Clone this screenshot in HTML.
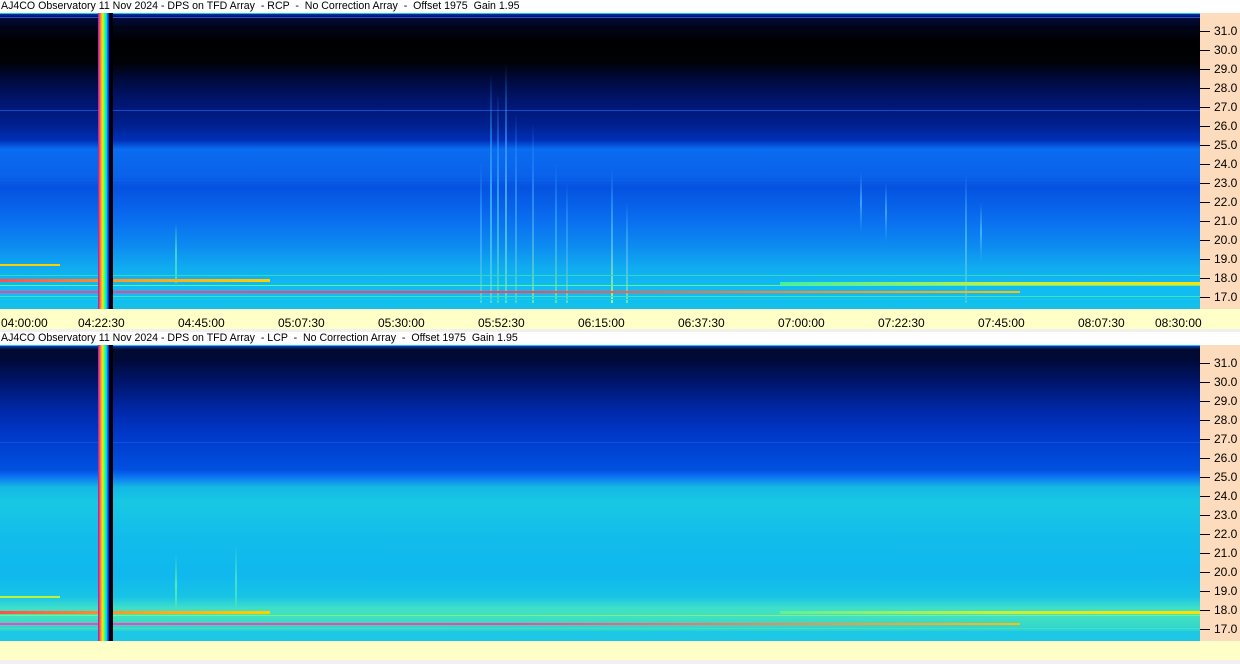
<!DOCTYPE html>
<html><head><meta charset="utf-8"><style>
*{margin:0;padding:0;box-sizing:border-box}
body{width:1240px;height:664px;background:#f0f0f0;position:relative;overflow:hidden;font-family:"Liberation Sans",sans-serif;color:#000}
.title{position:absolute;left:0;height:13px;width:1240px;background:#fff;font-size:10.6px;line-height:13px;white-space:pre;padding-left:1px}
.spec{position:absolute;left:0;width:1200px;overflow:hidden}
.axisr{position:absolute;left:1200px;width:40px;background:#fddcbe}
.taxis{position:absolute;left:0;width:1240px;background:#ffffc8}
.lab{position:absolute;font-size:12px;line-height:12px}
.tick{position:absolute;left:0;width:10px;height:1px;background:#000}
.tl{position:absolute;font-size:12px;line-height:12px;top:8px}
.s{position:absolute;width:2px}
.h{position:absolute;left:0;height:1px}
.rb{position:absolute;left:98px;width:15px;background:linear-gradient(90deg,#2050ff 0,#ff2080 7%,#ff6060 14%,#ff9a20 21%,#ffe000 29%,#b0ff10 36%,#40ff60 43%,#00ffc0 50%,#00c8ff 57%,#0070ff 64%,#2020ff 71%,#000 75%,#000 100%)}
</style></head><body>

<div class="title" style="top:0">AJ4CO Observatory 11 Nov 2024 - DPS on TFD Array  - RCP  -  No Correction Array  -  Offset 1975  Gain 1.95</div>
<div class="spec" style="top:13px;height:296px;background:linear-gradient(180deg,#0a40c0 0,#000a40 1.5%,#000418 5%,#000 10%,#000208 17%,#00093a 22%,#001570 30%,#00208e 38%,#0030b8 43%,#0a6cf0 46%,#0a62ea 55%,#0552e0 59%,#0a6ef0 70%,#0c8cf0 79%,#10acf0 86%,#10bcf0 93%,#12c0f0 100%)">
 <div class="h" style="top:0;width:1200px;background:#20c0ff"></div>
 <div class="h" style="top:4px;width:1200px;background:#2050e0"></div>
 <div class="h" style="top:97px;width:1200px;background:#1848c8"></div>
 <div class="h" style="top:167px;width:1200px;background:#1060f0;opacity:.5"></div>
 <div class="s" style="left:490px;top:60px;height:236px;background:linear-gradient(#2060ff00,#30a0ff,#40e0e0)"></div>
 <div class="s" style="left:497px;top:80px;height:216px;background:linear-gradient(#2060ff00,#30a0ff,#40e0c0)"></div>
 <div class="s" style="left:505px;top:50px;height:246px;background:linear-gradient(#2060ff00,#40a0ff,#50e8c0)"></div>
 <div class="s" style="left:515px;top:100px;height:196px;background:linear-gradient(#2060ff00,#3090ff,#40e0d0)"></div>
 <div class="s" style="left:532px;top:110px;height:186px;background:linear-gradient(#2060ff00,#3090ff,#60f0b0)"></div>
 <div class="s" style="left:555px;top:150px;height:146px;background:linear-gradient(#2060ff00,#30a0ff,#50f0b0)"></div>
 <div class="s" style="left:566px;top:170px;height:126px;background:linear-gradient(#2060ff00,#30a0ff,#50e8c0)"></div>
 <div class="s" style="left:611px;top:155px;height:141px;background:linear-gradient(#2060ff00,#40b0ff,#a0ff80)"></div>
 <div class="s" style="left:626px;top:190px;height:106px;background:linear-gradient(#2060ff00,#40b0ff,#60f0b0)"></div>
 <div class="s" style="left:480px;top:150px;height:146px;background:linear-gradient(#2060ff00,#30a0ff,#40e0d0)"></div>
 <div class="s" style="left:860px;top:160px;height:60px;background:linear-gradient(#2060ff00,#40a0ff,#2080ff00)"></div>
 <div class="s" style="left:885px;top:170px;height:60px;background:linear-gradient(#2060ff00,#40a0ff,#2080ff00)"></div>
 <div class="s" style="left:965px;top:160px;height:136px;background:linear-gradient(#2060ff00,#40b0ff,#40d0e0)"></div>
 <div class="s" style="left:980px;top:190px;height:60px;background:linear-gradient(#2060ff00,#40b0ff,#2080ff00)"></div>
 <div class="s" style="left:175px;top:210px;height:60px;background:linear-gradient(#2060ff00,#40d0e0,#40e0c0)"></div>
 <div class="h" style="top:251px;width:60px;height:2px;background:#ffd000"></div>
 <div class="h" style="top:262px;width:1200px;background:#30d8c8"></div>
 <div class="h" style="top:266px;width:270px;height:3px;background:linear-gradient(90deg,#ff5050,#ffa020,#ffd000)"></div>
 <div class="h" style="top:269px;left:780px;width:420px;height:3px;background:linear-gradient(90deg,#40f0a0,#c0f040,#ffe000)"></div>
 <div class="h" style="top:272px;width:1200px;background:#60f0a0"></div>
 <div class="h" style="top:278px;width:1020px;height:2px;background:linear-gradient(90deg,#ff40a0,#ff4060 50%,#ffc000)"></div>
 <div class="h" style="top:283px;width:1200px;background:#40e0c0"></div>
 <div class="h" style="top:286px;width:1200px;background:#18c8e8"></div>
 <div class="h" style="top:290px;width:1200px;height:6px;background:#14c0ea"></div>
</div>
<div class="rb" style="top:13px;height:296px"></div>

<div class="axisr" style="top:13px;height:296px">
 <div class="tick" style="top:18px"></div><div class="lab" style="left:14px;top:12px">31.0</div>
 <div class="tick" style="top:37px"></div><div class="lab" style="left:14px;top:31px">30.0</div>
 <div class="tick" style="top:56px"></div><div class="lab" style="left:14px;top:50px">29.0</div>
 <div class="tick" style="top:75px"></div><div class="lab" style="left:14px;top:69px">28.0</div>
 <div class="tick" style="top:94px"></div><div class="lab" style="left:14px;top:88px">27.0</div>
 <div class="tick" style="top:113px"></div><div class="lab" style="left:14px;top:107px">26.0</div>
 <div class="tick" style="top:132px"></div><div class="lab" style="left:14px;top:126px">25.0</div>
 <div class="tick" style="top:151px"></div><div class="lab" style="left:14px;top:145px">24.0</div>
 <div class="tick" style="top:170px"></div><div class="lab" style="left:14px;top:164px">23.0</div>
 <div class="tick" style="top:189px"></div><div class="lab" style="left:14px;top:183px">22.0</div>
 <div class="tick" style="top:208px"></div><div class="lab" style="left:14px;top:202px">21.0</div>
 <div class="tick" style="top:227px"></div><div class="lab" style="left:14px;top:221px">20.0</div>
 <div class="tick" style="top:246px"></div><div class="lab" style="left:14px;top:240px">19.0</div>
 <div class="tick" style="top:265px"></div><div class="lab" style="left:14px;top:259px">18.0</div>
 <div class="tick" style="top:284px"></div><div class="lab" style="left:14px;top:278px">17.0</div>
</div>

<div class="taxis" style="top:309px;height:20px">
 <div class="tl" style="left:1px">04:00:00</div>
 <div class="tl" style="left:78px">04:22:30</div>
 <div class="tl" style="left:178px">04:45:00</div>
 <div class="tl" style="left:278px">05:07:30</div>
 <div class="tl" style="left:378px">05:30:00</div>
 <div class="tl" style="left:478px">05:52:30</div>
 <div class="tl" style="left:578px">06:15:00</div>
 <div class="tl" style="left:678px">06:37:30</div>
 <div class="tl" style="left:778px">07:00:00</div>
 <div class="tl" style="left:878px">07:22:30</div>
 <div class="tl" style="left:978px">07:45:00</div>
 <div class="tl" style="left:1078px">08:07:30</div>
 <div class="tl" style="left:1155px">08:30:00</div>
</div>

<div class="title" style="top:332px">AJ4CO Observatory 11 Nov 2024 - DPS on TFD Array  - LCP  -  No Correction Array  -  Offset 1975  Gain 1.95</div>
<div class="spec" style="top:345px;height:296px;background:linear-gradient(180deg,#1050d0 0,#000a30 1.5%,#000a38 5%,#001468 12%,#0028a8 22%,#0038c8 30%,#0048d8 38%,#0050e0 42%,#0a6af0 44%,#1090ee 46%,#14b8e6 48%,#18c8e2 53%,#16c4e6 58%,#12bcea 65%,#10b8ee 78%,#18c4e6 85%,#40e0c8 89%,#40e0c0 92%,#20c8e0 100%)">
 <div class="h" style="top:0;width:1200px;background:#20c0ff"></div>
 <div class="h" style="top:97px;width:1200px;background:#2070f0;opacity:.4"></div>
 <div class="s" style="left:175px;top:210px;height:60px;background:linear-gradient(#2060ff00,#50e8c0,#40e0c0)"></div>
 <div class="s" style="left:235px;top:200px;height:70px;background:linear-gradient(#2060ff00,#40e0d0,#40e0c0)"></div>
 <div class="h" style="top:251px;width:60px;height:2px;background:#c0f040"></div>
 <div class="h" style="top:266px;width:270px;height:3px;background:linear-gradient(90deg,#ff5050,#ffa020,#ffd000)"></div>
 <div class="h" style="top:266px;left:780px;width:420px;height:3px;background:linear-gradient(90deg,#60f0a0,#c0f040,#ffe000)"></div>
 <div class="h" style="top:270px;width:1200px;background:#80f080"></div>
 <div class="h" style="top:278px;width:1020px;height:2px;background:linear-gradient(90deg,#ff40c0,#ff40a0 50%,#ffc000)"></div>
 <div class="h" style="top:283px;width:1200px;background:#40e0c0"></div>
 <div class="h" style="top:286px;width:1200px;height:10px;background:#1cc8e6"></div>
</div>
<div class="rb" style="top:345px;height:296px"></div>

<div class="axisr" style="top:345px;height:296px">
 <div class="tick" style="top:18px"></div><div class="lab" style="left:14px;top:12px">31.0</div>
 <div class="tick" style="top:37px"></div><div class="lab" style="left:14px;top:31px">30.0</div>
 <div class="tick" style="top:56px"></div><div class="lab" style="left:14px;top:50px">29.0</div>
 <div class="tick" style="top:75px"></div><div class="lab" style="left:14px;top:69px">28.0</div>
 <div class="tick" style="top:94px"></div><div class="lab" style="left:14px;top:88px">27.0</div>
 <div class="tick" style="top:113px"></div><div class="lab" style="left:14px;top:107px">26.0</div>
 <div class="tick" style="top:132px"></div><div class="lab" style="left:14px;top:126px">25.0</div>
 <div class="tick" style="top:151px"></div><div class="lab" style="left:14px;top:145px">24.0</div>
 <div class="tick" style="top:170px"></div><div class="lab" style="left:14px;top:164px">23.0</div>
 <div class="tick" style="top:189px"></div><div class="lab" style="left:14px;top:183px">22.0</div>
 <div class="tick" style="top:208px"></div><div class="lab" style="left:14px;top:202px">21.0</div>
 <div class="tick" style="top:227px"></div><div class="lab" style="left:14px;top:221px">20.0</div>
 <div class="tick" style="top:246px"></div><div class="lab" style="left:14px;top:240px">19.0</div>
 <div class="tick" style="top:265px"></div><div class="lab" style="left:14px;top:259px">18.0</div>
 <div class="tick" style="top:284px"></div><div class="lab" style="left:14px;top:278px">17.0</div>
</div>

<div class="taxis" style="top:641px;height:19px"></div>
</body></html>
